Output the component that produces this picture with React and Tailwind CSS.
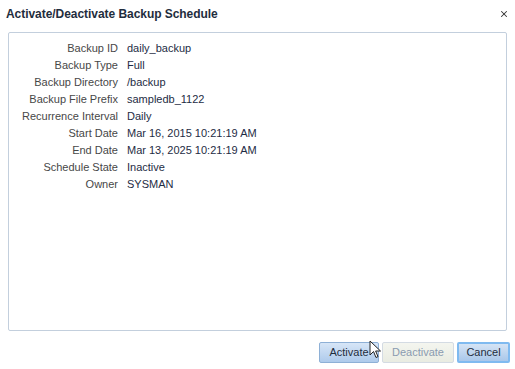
import { X } from 'lucide-react'

const rows = [
  ['Backup ID', 'daily_backup'],
  ['Backup Type', 'Full'],
  ['Backup Directory', '/backup'],
  ['Backup File Prefix', 'sampledb_1122'],
  ['Recurrence Interval', 'Daily'],
  ['Start Date', 'Mar 16, 2015 10:21:19 AM'],
  ['End Date', 'Mar 13, 2025 10:21:19 AM'],
  ['Schedule State', 'Inactive'],
  ['Owner', 'SYSMAN'],
]

export default function App() {
  return (
    <div className="relative w-[515px] h-[369px] bg-white flex flex-col text-[11px] font-['Liberation_Sans',Arial,sans-serif] overflow-hidden">
      {/* header */}
      <div className="h-[32px] flex items-start justify-between pl-[6px] pr-[4px] pt-[6px]">
        <h1 className="text-[12px] font-bold text-[#1f2d3d] leading-[16px] tracking-[-0.05px]">
          Activate/Deactivate Backup Schedule
        </h1>
        <button className="w-[14px] h-[14px] flex items-center justify-center text-[#333] mt-[1px]">
          <X size={10} strokeWidth={2.5} />
        </button>
      </div>

      {/* details panel */}
      <div className="mx-[8px] h-[299px] border border-[#c3cfdd] rounded-[2px] pt-[7px]">
        <div className="grid grid-cols-[109px_1fr] gap-x-[9px]">
          {rows.map(([label, value]) => (
            <div key={label} className="contents">
              <div className="text-right text-[#474747] leading-[17px] whitespace-nowrap">{label}</div>
              <div className="text-[#1e2c44] leading-[17px] whitespace-nowrap">{value}</div>
            </div>
          ))}
        </div>
      </div>

      {/* buttons */}
      <div className="flex justify-end gap-[3px] pr-[5px] mt-[11px]">
        <button className="h-[21px] w-[60px] rounded-[2px] border border-[#8eb0d6] bg-gradient-to-b from-[#d7e6f7] to-[#aecaeb] text-[#1f2d3d] text-[11px]">
          Activate
        </button>
        <button className="h-[21px] w-[72px] rounded-[2px] border border-[#d4dbe3] bg-gradient-to-b from-[#f4f5ef] to-[#e9ece2] text-[#8a9bb0] text-[11px]">
          Deactivate
        </button>
        <button className="h-[21px] w-[53px] rounded-[2px] border-2 border-[#7fbaf0] bg-gradient-to-b from-[#d5e4f5] to-[#a9c7ea] text-[#1f2d3d] text-[11px]">
          Cancel
        </button>
      </div>

      {/* mouse pointer over the Activate button */}
      <svg className="absolute left-[369px] top-[340px]" width="14" height="20" viewBox="0 0 14 20">
        <path d="M1 1 L1 15 L4.5 11.5 L7 17.5 L9 16.6 L6.6 11 L11.5 11 Z" fill="#fff" stroke="#222" strokeWidth="1" strokeLinejoin="round" />
      </svg>
    </div>
  )
}
